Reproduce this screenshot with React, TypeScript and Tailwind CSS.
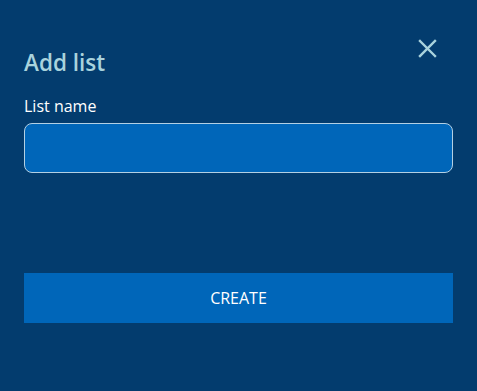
import { useState } from "react";

export default function App() {
    const [name, setName] = useState("");

    return (
        <div className="relative min-h-[391px] w-full bg-[#033c6e] px-6 pt-[47px] font-['Open_Sans',sans-serif]">
            <button
                aria-label="Close"
                className="absolute right-[40px] top-[39px] flex h-[19px] w-[19px] items-center justify-center text-[#a9d3dd]"
            >
                <svg width="19" height="19" viewBox="0 0 19 19" fill="none" stroke="currentColor" strokeWidth="2.4" strokeLinecap="square">
                    <path d="M2 2 L17 17 M17 2 L2 17" />
                </svg>
            </button>

            <h2 className="text-[22.5px] leading-8 font-semibold text-[#a9d3dd]">Add list</h2>

            <div className="mt-[15px] flex flex-col">
                <label htmlFor="list-name" className="text-base leading-6 font-medium text-white">List name</label>
                <input
                    id="list-name"
                    type="text"
                    value={name}
                    onChange={(e) => setName(e.target.value)}
                    className="mt-[5px] h-[50px] w-full rounded-lg border border-[#b3d0e4] bg-[#0066b9] px-3 text-white outline-none"
                />
            </div>

            <button className="mt-[100px] flex h-[50px] w-full items-center justify-center bg-[#0066b9] text-base text-white">
                CREATE
            </button>
        </div>
    );
}
